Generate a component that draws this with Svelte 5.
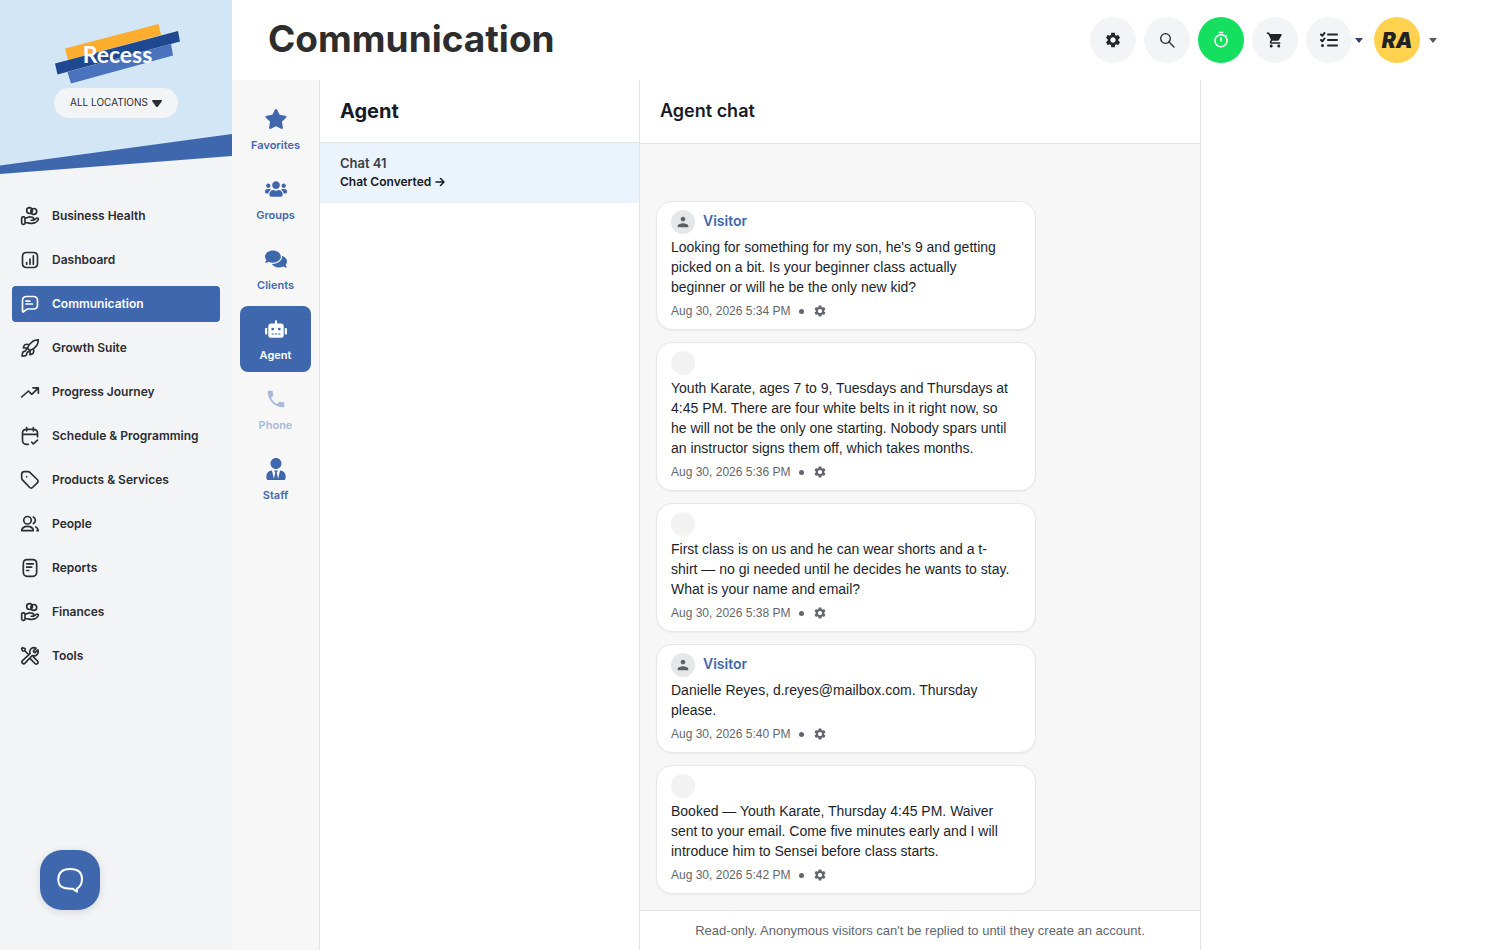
<script>
  const nav = [
    { label: 'Business Health', icon: 'coins' },
    { label: 'Dashboard', icon: 'chart' },
    { label: 'Communication', icon: 'message' },
    { label: 'Growth Suite', icon: 'rocket' },
    { label: 'Progress Journey', icon: 'trend' },
    { label: 'Schedule & Programming', icon: 'calendar' },
    { label: 'Products & Services', icon: 'tag' },
    { label: 'People', icon: 'people' },
    { label: 'Reports', icon: 'report' },
    { label: 'Finances', icon: 'coins' },
    { label: 'Tools', icon: 'tools' }
  ];

  const navPaths = {
    coins:
      'M6 20.09h2.61c.34 0 .68.04 1.01.12l2.76.67c.6.15 1.22.16 1.82.04l3.05-.59a4.2 4.2 0 0 0 2.13-1.11l2.16-2.1a1.5 1.5 0 0 0 0-2.17 1.6 1.6 0 0 0-2.06-.14l-2.52 1.83a2.1 2.1 0 0 1-1.25.41h-2.43 1.55c.87 0 1.58-.69 1.58-1.53v-.31c0-.7-.5-1.32-1.2-1.49l-2.38-.58a5 5 0 0 0-1.19-.14c-.96 0-2.71.8-2.71.8L6 15.02M3.6 13h.8c1.2 0 1.6.4 1.6 1.6v5.8c0 1.2-.4 1.6-1.6 1.6h-.8C2.4 22 2 21.600 2 20.400v-5.8c0-1.200.4-1.600 1.600-1.600zM20 6.500a3.500 3.500 0 1 1-7 0 3.500 3.500 0 0 1 7 0zM15 5.500a3.500 3.500 0 1 1-7 0 3.500 3.500 0 0 1 7 0z',
    chart:
      'M8 15v2M12 11v6M16 7v10M7.800 21h8.400c3.600 0 4.800-1.200 4.800-4.800V7.800C21 4.200 19.800 3 16.200 3H7.800C4.200 3 3 4.200 3 7.800v8.400C3 19.800 4.200 21 7.800 21z',
    message:
      'M7 8.500h5M7 12h8M7.800 3h8.400C19.800 3 21 4.200 21 7.800v5.400c0 3.600-1.200 4.800-4.800 4.800H9.700c-1 0-1.500.2-2.200.7L4.600 21C3.500 21.800 3 21.600 3 20.300V7.800C3 4.200 4.200 3 7.800 3z',
    rocket:
      'M5.500 16c-2 0-3 1.500-3 5.700 4.200 0 5.700-1 5.700-3.200M12 15l-3-3c1.500-3.700 3.500-6.200 6.200-8 2-1.200 4.300-1.800 6.800-1.800 0 2.600-.6 4.900-1.900 6.800-1.800 2.700-4.400 4.600-8.100 6zM9 12H4s.5-3 2-4c1.700-1.100 5 0 5 0M12 15v5s3-.5 4-2c1.100-1.700 0-5 0-5M9 12l-2.500 3.500M12 15l-3.500 2.500',
    trend: 'M22 7l-7.200 7.200c-.5.5-.8.500-1.300 0l-2.800-2.800c-.5-.5-.8-.500-1.300 0L2 18M22 7h-6.500M22 7v6.500',
    calendar:
      'M21 10H3M16 2v4M8 2v4M10 22H7.800C4.200 22 3 20.800 3 17.200V8.800C3 5.200 4.200 4 7.800 4h8.400C19.800 4 21 5.200 21 8.800V13M14 19.500l2 2 5-4.500',
    tag: 'M8 8h.01M2 5.200v4.500c0 .8.100 1.300.9 2.100l8.500 8.900c1.300 1.300 2.700 1.400 4 0l5.300-5.300c1.400-1.300 1.300-2.700 0-4l-8.900-8.500c-.8-.8-1.300-.9-2.100-.9H5.200C3 2 2 3 2 5.200z',
    people:
      'M16 3.500a4.500 4.500 0 0 1 0 8M19 15.500c1.700.8 2.600 2 3 4.500h-1.500M13.500 7.500a4.500 4.500 0 1 1-9 0 4.500 4.500 0 0 1 9 0zM2 20c.4-3.500 3-5.200 7-5.200s6.600 1.700 7 5.200z',
    report:
      'M8 7h8M8 11h6M8 15h2.500M8.800 2h6.400C18.800 2 20 3.200 20 6.800v10.400c0 3.600-1.200 4.800-4.800 4.800H8.800C5.200 22 4 20.800 4 17.200V6.800C4 3.200 5.200 2 8.800 2z',
    tools:
      'M6 6l4.500 4.500M6 6H3L2 3l1-1 3 1zM19.300 2.700l-2.600 2.600c-.7.7-.7 1.300 0 2s1.300.7 2 0l2.600-2.600a5 5 0 0 1-6.600 6.700L6 20.600a2 2 0 0 1-3-3L12.200 9a5 5 0 0 1 7.100-6.300zM12.500 15.500l5.500 5.500a2 2 0 0 0 3-3l-5-5'
  };

  const channels = [
    { label: 'Favorites', w: 22, h: 20, box: '18 0 540 512', d: 'M259.3 17.8L194 150.2 47.9 171.5c-26.2 3.8-36.7 36.1-17.7 54.6l105.700 103-25 145.500c-4.500 26.300 23.200 46 46.400 33.700L288 439.600l130.700 68.700c23.200 12.200 50.900-7.400 46.400-33.700l-25-145.500 105.700-103c19-18.500 8.500-50.800-17.700-54.600L382 150.200 316.700 17.800c-11.700-23.600-45.600-23.900-57.400 0z' },
    { label: 'Groups', w: 22, h: 18, box: '0 0 640 512', d: 'M96 224c35.3 0 64-28.7 64-64s-28.7-64-64-64-64 28.7-64 64 28.7 64 64 64zm448 0c35.3 0 64-28.7 64-64s-28.7-64-64-64-64 28.7-64 64 28.7 64 64 64zm32 32h-64c-17.6 0-33.5 7.1-45.1 18.6 40.3 22.1 68.9 62 75.1 109.4h66c17.7 0 32-14.3 32-32v-32c0-35.3-28.7-64-64-64zm-256 0c61.9 0 112-50.1 112-112S381.9 32 320 32 208 82.1 208 144s50.1 112 112 112zm76.8 32h-8.3c-20.8 10-43.9 16-68.5 16s-47.6-6-68.5-16h-8.3C179.6 288 128 339.6 128 403.2V432c0 26.5 21.5 48 48 48h288c26.5 0 48-21.5 48-48v-28.8c0-63.6-51.6-115.2-115.2-115.2zm-223.7-13.4C161.5 263.1 145.6 256 128 256H64c-35.3 0-64 28.7-64 64v32c0 17.7 14.3 32 32 32h65.9c6.3-47.4 34.9-87.3 75.2-109.4z' },
    { label: 'Clients', w: 22, h: 20, box: '0 0 576 512', d: 'M416 192c0-88.4-93.1-160-208-160S0 103.6 0 192c0 34.3 14.1 65.9 38 92-13.4 30.2-35.5 54.2-35.8 54.5-2.2 2.3-2.8 5.7-1.5 8.7S4.8 352 8 352c36.6 0 66.9-12.3 88.7-25 32.2 15.7 70.3 25 111.3 25 114.9 0 208-71.6 208-160zm122 220c23.9-26 38-57.7 38-92 0-66.9-53.5-124.2-129.3-148.1.9 6.6 1.3 13.3 1.3 20.1 0 105.9-107.7 192-240 192-10.8 0-21.3-.8-31.7-1.9C207.8 439.6 281.8 480 368 480c41 0 79.1-9.2 111.3-25 21.8 12.7 52.1 25 88.7 25 3.2 0 6.1-1.9 7.3-4.8 1.3-2.9.7-6.3-1.5-8.7-.3-.2-22.4-24.2-35.8-54.5z' },
    { label: 'Agent', w: 22, h: 18, box: '0 0 640 512', d: 'M32 224h32v192H32a32 32 0 0 1-32-32V256a32 32 0 0 1 32-32zm512-48v272a64 64 0 0 1-64 64H160a64 64 0 0 1-64-64V176a80 80 0 0 1 80-80h112V32a32 32 0 0 1 64 0v64h112a80 80 0 0 1 80 80zM264 256a40 40 0 1 0-40 40 40 40 0 0 0 40-40zm-8 128h-64v32h64zm96 0h-64v32h64zm104-128a40 40 0 1 0-40 40 40 40 0 0 0 40-40zm-8 128h-64v32h64zm192-128v128a32 32 0 0 1-32 32h-32V224h32a32 32 0 0 1 32 32z' },
    { label: 'Phone', w: 22, h: 22, box: '0 0 24 24', d: 'M6.62 10.79c1.44 2.83 3.76 5.14 6.59 6.59l2.2-2.2c.27-.27.67-.36 1.02-.24 1.12.37 2.33.57 3.57.57.55 0 1 .45 1 1V20c0 .55-.45 1-1 1-9.39 0-17-7.61-17-17 0-.55.45-1 1-1h3.5c.55 0 1 .45 1 1 0 1.25.2 2.45.57 3.57.11.35.03.74-.25 1.02l-2.2 2.2z' },
    { label: 'Staff', w: 20, h: 22, box: '0 0 448 512', d: 'M224 256c70.7 0 128-57.3 128-128S294.7 0 224 0 96 57.3 96 128s57.3 128 128 128zm95.8 32.6L272 480l-32-136 32-56h-96l32 56-32 136-47.800-191.400C56.900 292 0 350.300 0 422.400V464c0 26.500 21.500 48 48 48h352c26.500 0 48-21.500 48-48v-41.600c0-72.100-56.900-130.400-128.200-133.800z' }
  ];

  const messages = [
    { visitor: true, time: 'Aug 30, 2026 5:34 PM', text: "Looking for something for my son, he's 9 and getting picked on a bit. Is your beginner class actually beginner or will he be the only new kid?" },
    { visitor: false, time: 'Aug 30, 2026 5:36 PM', text: 'Youth Karate, ages 7 to 9, Tuesdays and Thursdays at 4:45 PM. There are four white belts in it right now, so he will not be the only one starting. Nobody spars until an instructor signs them off, which takes months.' },
    { visitor: false, time: 'Aug 30, 2026 5:38 PM', text: 'First class is on us and he can wear shorts and a t-shirt — no gi needed until he decides he wants to stay. What is your name and email?' },
    { visitor: true, time: 'Aug 30, 2026 5:40 PM', text: 'Danielle Reyes, d.reyes@mailbox.com. Thursday please.' },
    { visitor: false, time: 'Aug 30, 2026 5:42 PM', text: 'Booked — Youth Karate, Thursday 4:45 PM. Waiver sent to your email. Come five minutes early and I will introduce him to Sensei before class starts.' }
  ];

  const gear =
    'M19.14 12.94c.04-.3.06-.61.06-.94 0-.32-.02-.64-.07-.94l2.03-1.58c.18-.14.23-.41.12-.61l-1.92-3.32c-.12-.22-.37-.29-.59-.22l-2.39.96c-.5-.38-1.03-.7-1.62-.94l-.36-2.54c-.04-.24-.24-.41-.48-.41h-3.84c-.24 0-.43.17-.47.41l-.36 2.54c-.59.24-1.13.57-1.62.94l-2.39-.96c-.22-.08-.47 0-.59.22L2.74 8.87c-.12.21-.08.47.12.61l2.03 1.58c-.05.3-.09.63-.09.94s.02.64.07.94l-2.03 1.58c-.18.14-.23.41-.12.61l1.92 3.32c.12.22.37.29.59.22l2.39-.96c.5.38 1.03.7 1.62.94l.36 2.54c.05.24.24.41.48.41h3.84c.24 0 .44-.17.47-.41l.36-2.54c.59-.24 1.13-.56 1.62-.94l2.39.96c.22.08.47 0 .59-.22l1.92-3.32c.12-.22.07-.47-.12-.61l-2.01-1.58zM12 15.6c-1.98 0-3.6-1.62-3.6-3.6s1.62-3.6 3.6-3.6 3.6 1.62 3.6 3.6-1.62 3.6-3.6 3.6z';
</script>

<div class="app">
  <aside class="sidebar">
    <div class="brand">
      <svg class="banner" viewBox="0 0 232 174" preserveAspectRatio="none" aria-hidden="true">
        <path fill="#d3e6f5" d="M0 0h232v140L0 170z" />
        <path fill="#3f67ae" d="M0 165.500L232 134v22L0 174z" />
      </svg>
      <div class="logo">
        <svg viewBox="52 23 128 62" width="128" height="62" aria-hidden="true">
          <path fill="#fdae2f" d="M65 48.500L158.500 24l2.500 11L68 60z" />
          <path fill="#4a73bd" d="M67.500 72L171 44l2 11.500L71 83.500z" />
          <path fill="#204890" d="M55 63.500L178 31l2 10.500L57.500 74.500z" />
        </svg>
        <span>Recess</span>
      </div>
      <div class="location">
        <select aria-label="Location"><option>ALL LOCATIONS</option></select>
        <svg viewBox="0 0 10 7" width="10" height="7" aria-hidden="true"><path d="M0 1q0-1 1-1h8q1 0 1 1L6 6.500q-1 1-2 0z" /></svg>
      </div>
    </div>
    <nav class="nav" aria-label="Main">
      {#each nav as item}
        <a href="#main" class:active={item.label === 'Communication'}>
          <svg viewBox="0 0 24 24" width="20" height="20" aria-hidden="true"><path d={navPaths[item.icon]} /></svg>
          <span>{item.label}</span>
        </a>
      {/each}
    </nav>
    <button class="help" aria-label="Open support chat">
      <svg viewBox="0 0 28 28" width="28" height="28" aria-hidden="true"><path d="M21 22.500v3.200l-4.500-3C8 23 2.300 21.500 2.300 13.500 2.300 6 7 3 14.200 3S26 6 26 13c0 4.500-1.800 7.700-5 9.500z" /></svg>
    </button>
  </aside>

  <main id="main">
    <header class="topbar">
      <h1>Communication</h1>
      <div class="actions">
        <button aria-label="Settings"><svg viewBox="0 0 24 24" width="18" height="18"><path d={gear} /></svg></button>
        <button aria-label="Search"><svg class="line" viewBox="0 0 16 16" width="16" height="16"><circle cx="6.500" cy="6.500" r="4.800" /><path d="M10 10l5 5" /></svg></button>
        <button class="timer" aria-label="Timer"><svg viewBox="0 0 24 24" width="18" height="18"><path d="M9 1h6v2H9zm10.030 6.390 1.420-1.420c-.43-.51-.9-.99-1.410-1.410l-1.420 1.420C16.070 4.740 14.120 4 12 4c-4.970 0-9 4.030-9 9s4.020 9 9 9 9-4.030 9-9c0-2.120-.74-4.070-1.970-5.610zM12 20c-3.870 0-7-3.130-7-7s3.130-7 7-7 7 3.130 7 7-3.130 7-7 7zM11 8h2v6h-2z" /></svg></button>
        <button aria-label="Cart"><svg viewBox="0 0 24 24" width="18" height="18"><path d="M7 18c-1.100 0-1.990.9-1.990 2S5.900 22 7 22s2-.9 2-2-.9-2-2-2zM1 2v2h2l3.600 7.590-1.350 2.450c-.16.28-.25.61-.25.960 0 1.100.9 2 2 2h12v-2H7.420c-.14 0-.25-.11-.25-.25l.03-.12.900-1.630h7.450c.75 0 1.410-.41 1.750-1.030l3.580-6.490c.08-.14.12-.31.12-.48 0-.55-.45-1-1-1H5.210l-.94-2H1zm16 16c-1.100 0-1.990.9-1.990 2s.89 2 1.990 2 2-.9 2-2-.9-2-2-2z" /></svg></button>
        <button aria-label="Tasks"><svg class="tasks" viewBox="0 0 18 16" width="18" height="16"><path d="M8 2.500h9M8 8h9M8 13.500h9M1 2.500l1.300 1.300L4.500 1M1 8l1.300 1.300 2.200-2.800" /><circle cx="2.500" cy="13.500" r="1.500" /></svg></button>
        <svg class="caret tasks-caret" viewBox="0 0 8 5" width="8" height="5" aria-hidden="true"><path d="M0 0h8L4 5z" /></svg>
        <button class="avatar" aria-label="Account RA">RA</button>
        <svg class="caret" viewBox="0 0 8 5" width="8" height="5" aria-hidden="true"><path d="M0 0h8L4 5z" /></svg>
      </div>
    </header>

    <div class="workspace">
      <nav class="rail" aria-label="Channels">
        {#each channels as c}
          <a href="#main" class:active={c.label === 'Agent'} class:dim={c.label === 'Phone'}>
            <span class="glyph"><svg viewBox={c.box} width={c.w} height={c.h} aria-hidden="true"><path d={c.d} /></svg></span>
            {c.label}
          </a>
        {/each}
      </nav>

      <section class="list">
        <h2>Agent</h2>
        <a class="thread" href="#main">
          <span>Chat 41</span>
          <strong>Chat Converted
            <svg viewBox="0 0 10 10" width="10" height="10" aria-hidden="true"><path d="M1 5h8M5.500 1.500L9 5 5.500 8.500" /></svg>
          </strong>
        </a>
      </section>

      <section class="chat">
        <h3>Agent chat</h3>
        <div class="feed">
          {#each messages as m}
            <article>
              <div class="who">
                {#if m.visitor}
                  <span class="face"><svg viewBox="0 0 24 24" width="16" height="16" aria-hidden="true"><path d="M12 11c1.900 0 3.500-1.600 3.500-3.500S13.900 4 12 4 8.500 5.600 8.500 7.500 10.100 11 12 11zm0 3c-2.670 0-8 1.340-8 4v2h16v-2c0-2.660-5.330-4-8-4z" /></svg></span>
                  <b>Visitor</b>
                {:else}
                  <span class="face blank"></span>
                {/if}
              </div>
              <p>{m.text}</p>
              <div class="meta">
                <time>{m.time}</time>
                <i></i>
                <button aria-label="Message options"><svg viewBox="0 0 24 24" width="14" height="14"><path d={gear} /></svg></button>
              </div>
            </article>
          {/each}
        </div>
        <footer>Read-only. Anonymous visitors can't be replied to until they create an account.</footer>
      </section>
    </div>
  </main>
</div>

<style>
  :global(body) {
    margin: 0;
    background: #fff;
  }
  .app {
    display: grid;
    grid-template-columns: 232px minmax(0, 1fr);
    min-height: 100vh;
    font-family: Inter, 'Liberation Sans', sans-serif;
    color: #1c1f2b;
  }
  .app *,
  .app {
    box-sizing: border-box;
  }
  button {
    border: 0;
    padding: 0;
    font: inherit;
    cursor: pointer;
  }
  a {
    color: inherit;
    text-decoration: none;
  }
  svg {
    display: block;
    flex: none;
  }
  h1,
  h2,
  h3,
  p {
    margin: 0;
  }

  .sidebar {
    display: flex;
    flex-direction: column;
    background: #f2f4f6;
  }
  .brand {
    position: relative;
    display: flex;
    flex-direction: column;
    align-items: center;
    gap: 3px;
    height: 174px;
    padding-top: 23px;
  }
  .banner {
    position: absolute;
    inset: 0;
    width: 100%;
    height: 100%;
  }
  .logo {
    position: relative;
    display: grid;
    place-items: center;
  }
  .logo > * {
    grid-area: 1 / 1;
  }
  .logo span {
    padding-left: 3px;
    color: #fff;
    font: 700 23px/24px Lato, sans-serif;
  }
  .location {
    position: relative;
    display: grid;
    align-items: center;
  }
  .location > * {
    grid-area: 1 / 1;
  }
  .location svg {
    justify-self: end;
    margin-right: 16px;
    fill: #2b2d30;
    pointer-events: none;
  }
  select {
    appearance: none;
    height: 30px;
    padding: 0 30px 2px 16px;
    border: 0;
    border-radius: 15px;
    background: #f2f4f6;
    color: #2b2d30;
    font: 400 10px/28px Inter, sans-serif;
  }
  .nav {
    display: flex;
    flex-direction: column;
    gap: 8px;
    padding: 24px 12px;
  }
  .nav a {
    display: flex;
    align-items: center;
    gap: 12px;
    height: 36px;
    padding: 0 8px;
    border-radius: 4px;
    font-size: 12px;
    font-weight: 600;
    color: #2b2d30;
    white-space: nowrap;
  }
  .nav span {
    padding-bottom: 2px;
  }
  .nav a.active {
    background: #3f67ae;
    color: #fff;
  }
  .nav svg,
  .help svg {
    fill: none;
    stroke: currentColor;
    stroke-width: 2;
    stroke-linecap: round;
    stroke-linejoin: round;
  }
  .help {
    display: grid;
    place-items: center;
    width: 60px;
    height: 60px;
    margin: auto 0 40px 40px;
    border-radius: 22px;
    background: #3f67ae;
    color: #fff;
    box-shadow: 0 2px 8px rgb(0 0 0 / 12%);
  }

  main {
    display: flex;
    flex-direction: column;
    min-width: 0;
  }
  .topbar {
    display: flex;
    align-items: center;
    justify-content: space-between;
    height: 80px;
    padding: 0 63px 0 36px;
  }
  h1 {
    padding-bottom: 2px;
    font-size: 37px;
    line-height: 48px;
    font-weight: 700;
    color: #2d2d2d;
  }
  .actions {
    display: flex;
    align-items: center;
    gap: 8px;
  }
  .actions button {
    display: grid;
    place-items: center;
    width: 46px;
    height: 46px;
    border-radius: 50%;
    background: #f2f4f6;
    color: #222426;
    fill: currentColor;
  }
  .actions .timer {
    background: #14df5e;
    color: #fff;
  }
  .actions .avatar {
    margin-right: 1px;
    background: #fed24f;
    color: #222;
    font-size: 21px;
    font-weight: 900;
    font-style: italic;
  }
  .line {
    fill: none;
    stroke: currentColor;
    stroke-width: 1.300;
    stroke-linecap: round;
  }
  .tasks {
    stroke: currentColor;
    stroke-width: 2;
    stroke-linecap: round;
    stroke-linejoin: round;
  }
  .tasks path {
    fill: none;
  }
  .tasks circle {
    stroke: none;
  }
  .caret {
    fill: #55585c;
  }
  .tasks-caret {
    margin: 0 3px 0 -5px;
    fill: #353a72;
  }

  .workspace {
    flex: 1;
    display: grid;
    grid-template-columns: 88px 320px minmax(0, 561px);
  }
  .rail {
    display: flex;
    flex-direction: column;
    gap: 4px;
    padding: 16px 8px;
    border-right: 1px solid #e3e4e6;
    background: #f7f7f7;
  }
  .rail a {
    display: flex;
    flex-direction: column;
    align-items: center;
    height: 66px;
    padding-top: 12px;
    gap: 8px;
    border-radius: 8px;
    color: #3f67ae;
    fill: currentColor;
    font-size: 11px;
    line-height: 14px;
    font-weight: 600;
  }
  .rail .active {
    background: #3f67ae;
    color: #fff;
  }
  .rail .dim {
    color: #a9b9dc;
  }
  .glyph {
    display: grid;
    place-items: center;
    height: 22px;
  }

  .list {
    border-right: 1px solid #e3e4e6;
  }
  h2,
  h3 {
    display: flex;
    align-items: center;
    height: 63px;
    padding: 0 20px;
    border-bottom: 1px solid #e3e4e6;
    font-size: 20px;
    font-weight: 700;
    color: #171a26;
  }
  h3 {
    height: 64px;
    padding-bottom: 2px;
    font-size: 18px;
    font-weight: 600;
  }
  .thread {
    display: flex;
    flex-direction: column;
    height: 60px;
    padding: 10px 20px;
    background: #ebf3fc;
    font-size: 13px;
    line-height: 20px;
    font-weight: 600;
    color: #3a3d45;
  }
  .thread strong {
    display: flex;
    align-items: center;
    gap: 4px;
    font-size: 12px;
    line-height: 18px;
    font-weight: 600;
    color: #171a26;
  }
  .thread svg {
    fill: none;
    stroke: currentColor;
    stroke-width: 1.500;
    stroke-linecap: round;
    stroke-linejoin: round;
  }

  .chat {
    display: flex;
    flex-direction: column;
    border-right: 1px solid #e3e4e6;
  }
  .feed {
    flex: 1;
    display: flex;
    flex-direction: column;
    justify-content: flex-end;
    gap: 12px;
    padding: 16px;
    background: #f7f7f7;
  }
  article {
    width: 72%;
    padding: 8px 14px;
    border: 1px solid #e6e7e9;
    border-radius: 16px;
    background: #fff;
    box-shadow: 0 1px 2px rgb(0 0 0 / 5%);
  }
  .who {
    display: flex;
    gap: 8px;
    height: 27px;
    font-size: 14px;
    line-height: 22px;
    color: #3f67ae;
  }
  .who b {
    font-weight: 600;
  }
  .face {
    display: grid;
    place-items: center;
    width: 24px;
    height: 24px;
    border-radius: 50%;
    background: #e6e7e8;
    fill: #5d6066;
  }
  .blank {
    background: #f2f2f2;
  }
  p,
  .meta,
  footer {
    font-family: 'Liberation Sans', Arial, sans-serif;
  }
  p {
    padding-right: 10px;
    font-size: 14px;
    line-height: 20px;
  }
  .meta {
    display: flex;
    align-items: center;
    gap: 9px;
    height: 20px;
    margin-top: 4px;
    font-size: 12px;
    color: #63666d;
  }
  .meta i {
    width: 5px;
    height: 5px;
    border-radius: 50%;
    background: currentColor;
  }
  .meta button {
    background: none;
    color: inherit;
    fill: currentColor;
  }
  footer {
    height: 40px;
    border-top: 1px solid #e3e4e6;
    text-align: center;
    font-size: 13px;
    line-height: 39px;
    color: #63666d;
  }
</style>
